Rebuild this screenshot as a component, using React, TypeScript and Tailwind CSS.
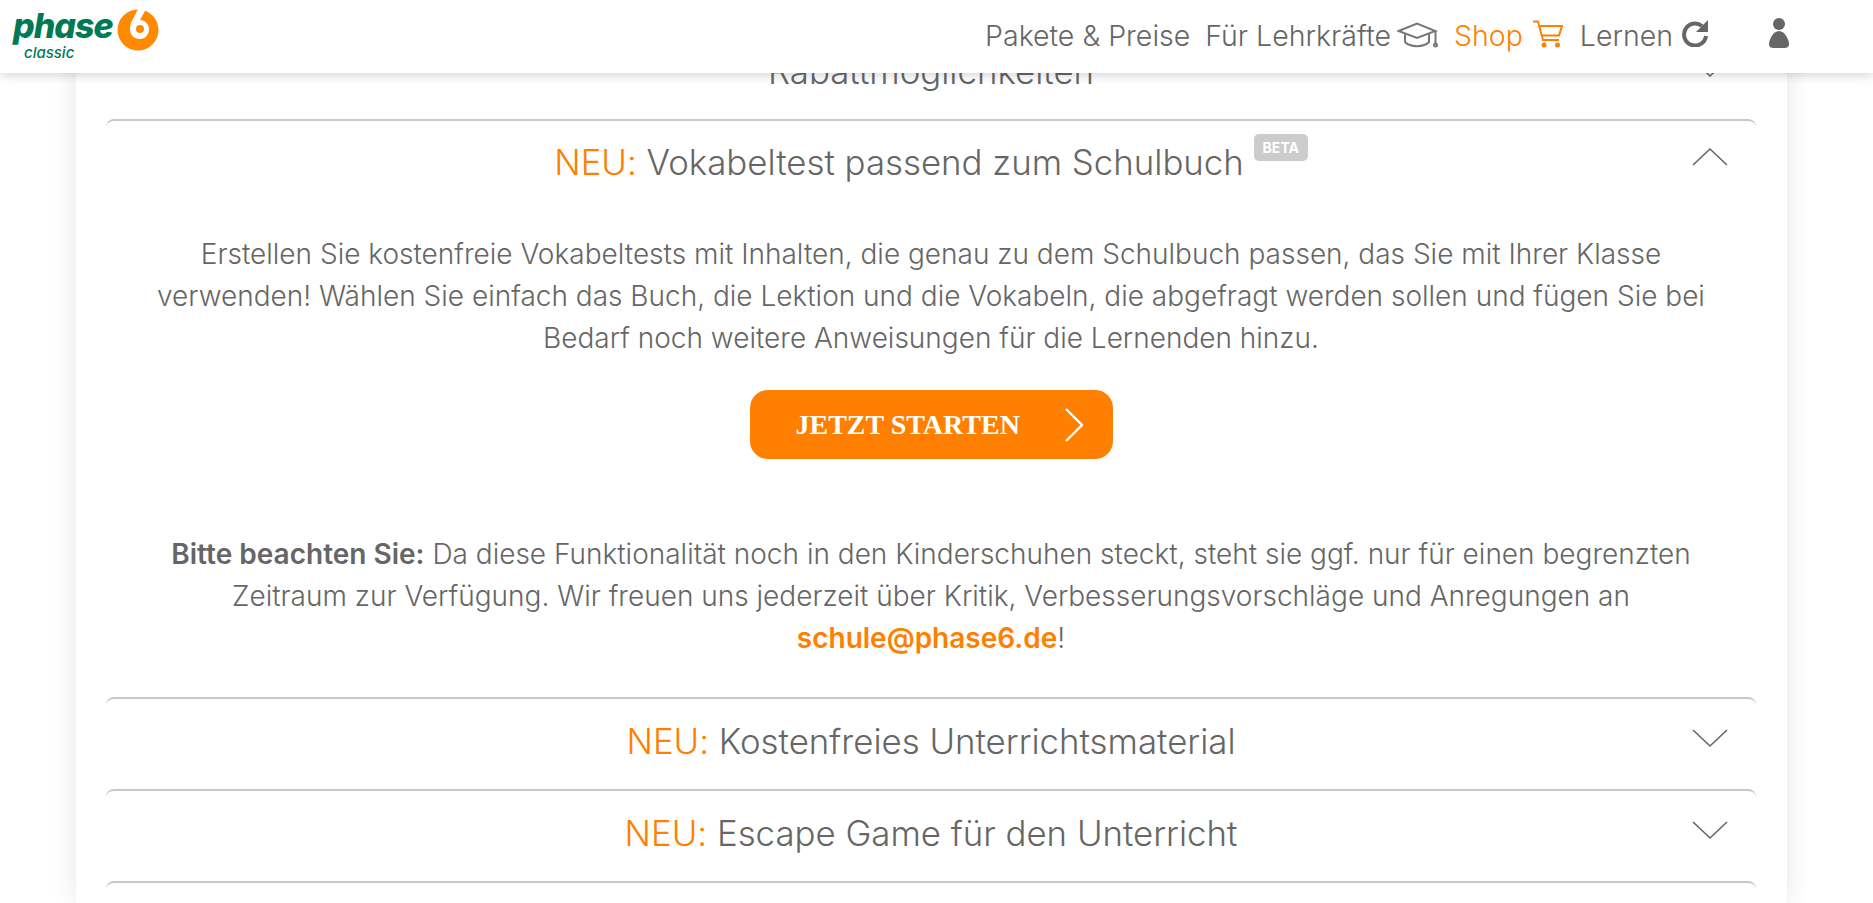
const ORANGE = "text-[#ff8000]";

function Chevron({ up = false }: { up?: boolean }) {
  return (
    <svg width="36" height="20" viewBox="0 0 36 20" fill="none" stroke="#666" strokeWidth="1.6">
      <path d={up ? "M1 18 L18 2 L35 18" : "M1 2 L18 18 L35 2"} />
    </svg>
  );
}

function AccordionRow({ title, neu = true }: { title: string; neu?: boolean }) {
  return (
    <div className="relative h-[92px] rounded-t-lg border-t-2 border-[#c8c8c8]">
      <div className="flex h-[84px] items-center justify-center text-[34.8px] font-light text-[#666]">
        {neu && <span className={ORANGE}>NEU:&nbsp;</span>}
        {title}
      </div>
      <div className="absolute right-[28px] top-[29px]">
        <Chevron />
      </div>
    </div>
  );
}

function Logo() {
  return (
    <div className="relative h-[73px] w-[165px]">
      <span className="absolute left-[13px] top-[6px] text-[34px] font-extrabold italic leading-[40px] tracking-[-1px] text-[#007a53]">
        phase
      </span>
      <span className="absolute left-[24px] top-[44px] text-[15px] font-medium italic leading-[18px] text-[#007a53]">
        classic
      </span>
      <svg className="absolute left-[117px] top-[9px]" width="42" height="42" viewBox="0 0 42 42">
        <circle cx="21" cy="21" r="20.5" fill="#ff8a00" />
        <path d="M21 0 L29 0 L23 11 C28 11 32 15 32 20 C32 26 28 30 23 30 C17 30 13 26 13 20 C13 16 14 13 16 10 Z" fill="#fff" />
        <circle cx="23" cy="20" r="4" fill="#ff8a00" />
      </svg>
    </div>
  );
}

function Header() {
  return (
    <header className="absolute inset-x-0 top-0 z-10 flex h-[73px] items-center justify-between bg-white pr-[84px] shadow-[0_2px_10px_rgba(0,0,0,0.18)]">
      <Logo />
      <nav className="flex items-center pb-[7px] text-[28.5px] font-light leading-[35px] text-[#666]">
        <span className="pt-[4px]">Pakete &amp; Preise</span>
        <span className="ml-[15px] pt-[4px]">Für Lehrkräfte</span>
        <svg className="ml-[6px] mt-[4px]" width="41" height="26" viewBox="0 0 41 26" fill="none" stroke="#777" strokeWidth="2">
          <path d="M1.5 9 L20 1.5 L38.5 9 L20 16 Z" />
          <path d="M8 12 V20 C13 25.5 27 25.5 32 20 V12" />
          <path d="M38.5 9 V21" />
          <circle cx="38.5" cy="23" r="1.5" />
        </svg>
        <span className={`ml-[16px] pt-[4px] ${ORANGE}`}>Shop</span>
        <svg className="ml-[10px] mt-[2px]" width="30" height="28" viewBox="0 0 30 28" fill="none" stroke="#ff8000" strokeWidth="2">
          <path d="M0 1.5 H5 L10 20 H26" />
          <path d="M6.5 6 H29 L26 15.5 H9" />
          <circle cx="11" cy="25" r="1.5" fill="#ff8000" />
          <circle cx="24.5" cy="25" r="1.5" fill="#ff8000" />
        </svg>
        <span className="ml-[17px] pt-[4px]">Lernen</span>
        <svg className="ml-[8px]" width="28" height="28" viewBox="0 0 28 28" fill="none" stroke="#666" strokeWidth="4">
          <path d="M21 7 A11 11 0 1 0 25 17" />
          <path d="M27 1 V13 H15 Z" fill="#666" stroke="none" />
        </svg>
        <svg className="ml-[60px]" width="20" height="30" viewBox="0 0 20 30" fill="#666">
          <circle cx="10" cy="6" r="6" />
          <path d="M10 13 C4 13 0 22 0 26 C0 29 2 30 5 30 H15 C18 30 20 29 20 26 C20 22 16 13 10 13 Z" />
        </svg>
      </nav>
    </header>
  );
}

export default function App() {
  return (
    <div className="relative h-[903px] overflow-hidden bg-white [font-family:Inter,sans-serif] [font-feature-settings:'calt'_0]">
      <Header />
      <main className="ml-[76px] mr-[86px] h-[903px] overflow-hidden pl-[30px] pr-[31px] pt-[27px] shadow-[0_0_24px_rgba(0,0,0,0.1)]">
        <AccordionRow title="Rabattmöglichkeiten" neu={false} />

        <section className="relative rounded-t-lg border-t-2 border-[#c8c8c8] pt-[18px] text-center">
          <div className="flex h-[46px] items-center justify-center text-[34.8px] font-light text-[#666]">
            <span className={ORANGE}>NEU:&nbsp;</span>
            Vokabeltest passend zum Schulbuch
            <span className="mb-[30px] ml-[10px] flex h-[27px] w-[54px] items-center justify-center rounded-[5px] bg-[#ccc] text-[14px] font-bold text-white">
              BETA
            </span>
          </div>
          <div className="absolute right-[28px] top-[26px]">
            <Chevron up />
          </div>
          <p className="mt-[48px] text-[28px] font-light leading-[42px] text-[#666]">
            Erstellen Sie kostenfreie Vokabeltests mit Inhalten, die genau zu dem Schulbuch passen, das Sie mit Ihrer
            Klasse
            <br />
            verwenden! Wählen Sie einfach das Buch, die Lektion und die Vokabeln, die abgefragt werden sollen und fügen
            Sie bei
            <br />
            Bedarf noch weitere Anweisungen für die Lernenden hinzu.
          </p>
          <button
            type="button"
            className="mx-auto mt-[31px] flex h-[69px] w-[363px] items-center justify-between rounded-[18px] bg-[#ff8000] pl-[46px] pr-[30px] text-[28px] font-bold text-white [font-family:'Liberation_Serif',serif]"
          >
            JETZT STARTEN
            <svg width="18" height="34" viewBox="0 0 18 34" fill="none" stroke="#fff" strokeWidth="2.4">
              <path d="M1 1 L17 17 L1 33" />
            </svg>
          </button>
          <p className="mt-[74px] text-[28px] font-light leading-[42px] text-[#666]">
            <b className="font-semibold">Bitte beachten Sie:</b> Da diese Funktionalität noch in den Kinderschuhen
            steckt, steht sie ggf. nur für einen begrenzten
            <br />
            Zeitraum zur Verfügung. Wir freuen uns jederzeit über Kritik, Verbesserungsvorschläge und Anregungen an
            <br />
            <b className={`font-semibold ${ORANGE}`}>schule@phase6.de</b>!
          </p>
        </section>

        <div className="mt-[38px]">
          <AccordionRow title="Kostenfreies Unterrichtsmaterial" />
          <AccordionRow title="Escape Game für den Unterricht" />
          <div className="h-[20px] rounded-t-lg border-t-2 border-[#c8c8c8]" />
        </div>
      </main>
    </div>
  );
}
